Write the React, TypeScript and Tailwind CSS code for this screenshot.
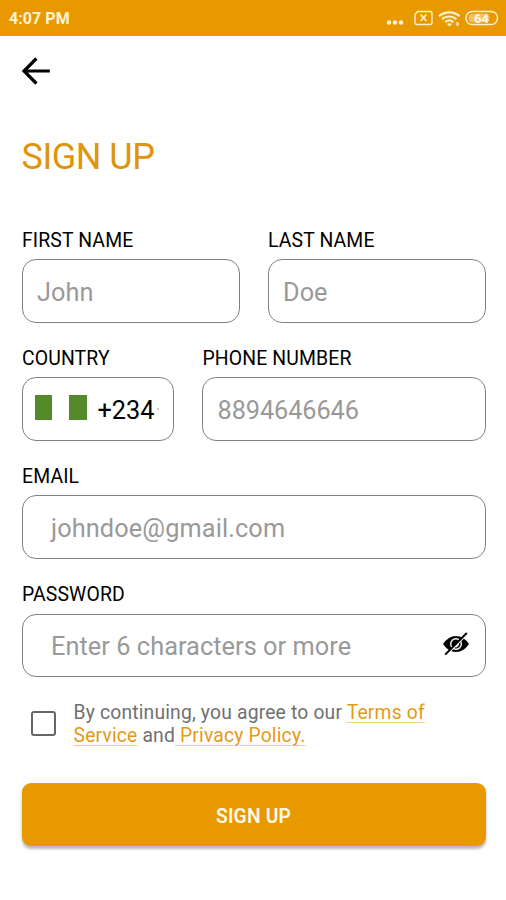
import type { ReactNode } from "react";

function StatusBar() {
  return (
    <div className="flex h-[35.5px] items-center justify-between bg-[#e89900] pl-[9px] pr-[7px] pt-0.5 text-[#fff3d6]">
      <span className="pt-px text-[16px] leading-5 font-bold tracking-[0.05px]">4:07 PM</span>
      <svg width="113" height="20" viewBox="0 0 113 20" fill="none" stroke="#fff0c8">
        <g fill="#fff3d6" stroke="none">
          <circle cx="3" cy="13.5" r="2.2" />
          <circle cx="9" cy="13.5" r="2.2" />
          <circle cx="15" cy="13.5" r="2.2" />
        </g>
        <path d="M32.500 2.500H45a2 2 0 0 1 2 2v9a2 2 0 0 1-2 2H32a2 2 0 0 1-2-2V5.500z" strokeWidth="1.400" transform="translate(-1)" />
        <path d="M34.700 5.600l5.600 6.400M40.300 5.600l-5.600 6.400" strokeWidth="1.700" />
        <path d="M53 7.200C59 2 67.500 2 73.500 7.200M56 10.200c4.200-3.600 10.200-3.600 14.400 0M59.200 13.200c2.700-2.200 5.700-2.200 8.200 0" strokeWidth="2.200" />
        <path d="M61 15q2.500-1.600 5 0l-2.500 2.500z" fill="#fff0c8" stroke="none" />
        <circle cx="71.500" cy="15" r="1.900" fill="#fbdc95" stroke="none" />
        <rect x="80" y="2.500" width="31.500" height="13" rx="6.300" strokeWidth="1.400" />
        <rect x="82.500" y="4.700" width="21" height="8.600" rx="4" fill="#f3c267" stroke="none" />
        <text x="95.500" y="13.600" textAnchor="middle" fontSize="13" fontWeight="700" fill="#fff8e5" stroke="none">64</text>
      </svg>
    </div>
  );
}

type FieldProps = { label: string; className?: string; boxClass: string; children: ReactNode };

function Field({ label, className = "", boxClass, children }: FieldProps) {
  return (
    <div className={className}>
      <div className="h-[33px] pt-[0.500px] pl-[0.500px] text-[19.400px] leading-7 tracking-[0.130px] whitespace-nowrap text-black">{label}</div>
      <div className={`flex h-[63.500px] items-center rounded-[14px] border border-[#808080] text-[25.300px] whitespace-nowrap text-[#999] ${boxClass}`}>
        {children}
      </div>
    </div>
  );
}

function HiddenEye() {
  return (
    <svg width="28" height="26" viewBox="0 0 28 26" fill="none">
      <path d="M1 13Q6.500 5 14 5T27 13Q21.500 21 14 21T1 13z" fill="#000" />
      <circle cx="14" cy="13" r="5.300" stroke="#fff" strokeWidth="1.400" />
      <path d="M12.500 15.500a2.800 2.800 0 0 0 3.800-3.500" stroke="#fff" strokeWidth="1.200" />
      <path d="M5.200 23.200L25.200 3.200" stroke="#fff" strokeWidth="1.600" />
      <path d="M3.200 23.600L24.800 2" stroke="#000" strokeWidth="2" />
    </svg>
  );
}

const link = "text-[#e39a16] underline decoration-[#efcf80] decoration-1 underline-offset-[3px]";

export default function App() {
  return (
    <div className="h-[900px] w-[506px] overflow-hidden bg-white font-['Roboto',sans-serif]">
      <StatusBar />
      <main className="pr-[20.500px] pl-[21.500px]">
        <button aria-label="Back" className="mt-[20px] -ml-px block">
          <svg width="30" height="30" viewBox="0 0 30 30" fill="none" stroke="#000" strokeWidth="3.200">
            <path d="M28.800 15H3M15.400 2.500L3 15l12.400 12.500" />
          </svg>
        </button>
        <h1 className="mt-[49.500px] h-[44px] text-[36px] leading-[44px] tracking-[-0.500px] text-[#e0940b]">SIGN UP</h1>
        <form className="mt-[47px] flex flex-col gap-[21.700px]">
          <div className="flex gap-[28px]">
            <Field label="FIRST NAME" className="flex-1" boxClass="px-[14.500px] pt-1 tracking-[0.040px]">John</Field>
            <Field label="LAST NAME" className="flex-1" boxClass="px-[14.500px] pt-1 tracking-[0.040px]">Doe</Field>
          </div>
          <div className="flex gap-[28px]">
            <Field label="COUNTRY" className="w-[152.500px]" boxClass="pl-[12px] pt-1">
              <span className="mb-[7px] flex gap-[17px]">
                <span className="h-[25px] w-[17.500px] bg-[#558a2b]" />
                <span className="h-[25px] w-[17.500px] bg-[#558a2b]" />
              </span>
              <span className="ml-[11px] text-black">+234</span>
              <span className="mb-1 ml-0.5 size-[2px] bg-[#ccc]" />
            </Field>
            <Field label="PHONE NUMBER" className="flex-1" boxClass="px-[14.500px] pt-1 tracking-[-0.080px]">8894646646</Field>
          </div>
          <Field label="EMAIL" boxClass="pl-[28.500px] pt-[3px] tracking-[0.120px]">johndoe@gmail.com</Field>
          <Field label="PASSWORD" boxClass="justify-between pl-[28.500px] pr-[15px] pt-[3px] tracking-[0.060px]">
            <span>Enter 6 characters or more</span>
            <span className="mb-1.5"><HiddenEye /></span>
          </Field>
        </form>
        <div className="mt-[24px] flex h-[46px] items-center pl-[9.500px]">
          <span className="mb-[2px] size-[25px] shrink-0 rounded-[3px] border-[2.500px] border-[#666]" />
          <p className="ml-[17.500px] text-[19.300px] leading-[23px] tracking-[0.180px] whitespace-nowrap text-[#707070]">
            By continuing, you agree to our <a className={link}>Terms of</a>
            <br />
            <a className={link}>Service</a> and<a className={link}> Privacy Policy.</a>
          </p>
        </div>
        <button className="mt-[36px] flex h-[63px] w-full items-center justify-center rounded-[9px] bg-[#e89900] pt-[5px] text-[19.300px] font-semibold tracking-[0.150px] text-[#fff8e5] shadow-[0_3px_3px_rgba(0,0,0,0.28)]">
          SIGN UP
        </button>
      </main>
    </div>
  );
}
